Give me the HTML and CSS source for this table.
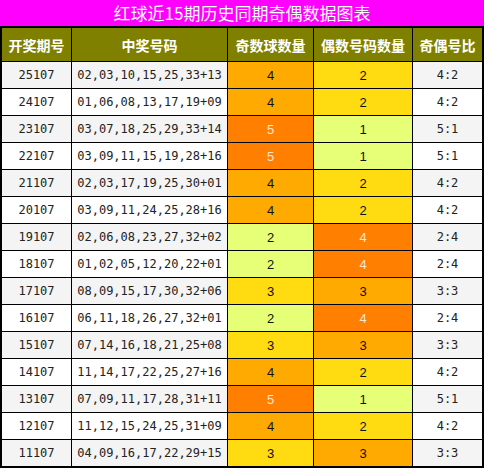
FILE: index.html
```html
<!DOCTYPE html>
<html lang="zh-CN">

<head>
    <meta charset="utf-8">
    <title>红球近15期历史同期奇偶数据图表</title>
    <link rel="stylesheet" href="styles.css">
</head>

<body>
    <div class="title">红球近15期历史同期奇偶数据图表</div>
    <table class="chart">
        <thead>
            <tr>
                <th class="c-issue">开奖期号</th>
                <th class="c-code">中奖号码</th>
                <th class="c-odd">奇数球数量</th>
                <th class="c-even">偶数号码数量</th>
                <th class="c-ratio">奇偶号比</th>
            </tr>
        </thead>
        <tbody>
            <tr>
                <td>25107</td><td class="code">02,03,10,15,25,33+13</td>
                <td class="num lv3">4</td><td class="num lv2">2</td><td>4:2</td>
            </tr>
            <tr>
                <td>24107</td><td class="code">01,06,08,13,17,19+09</td>
                <td class="num lv3">4</td><td class="num lv2">2</td><td>4:2</td>
            </tr>
            <tr>
                <td>23107</td><td class="code">03,07,18,25,29,33+14</td>
                <td class="num lv4">5</td><td class="num lv1">1</td><td>5:1</td>
            </tr>
            <tr>
                <td>22107</td><td class="code">03,09,11,15,19,28+16</td>
                <td class="num lv4">5</td><td class="num lv1">1</td><td>5:1</td>
            </tr>
            <tr>
                <td>21107</td><td class="code">02,03,17,19,25,30+01</td>
                <td class="num lv3">4</td><td class="num lv2">2</td><td>4:2</td>
            </tr>
            <tr>
                <td>20107</td><td class="code">03,09,11,24,25,28+16</td>
                <td class="num lv3">4</td><td class="num lv2">2</td><td>4:2</td>
            </tr>
            <tr>
                <td>19107</td><td class="code">02,06,08,23,27,32+02</td>
                <td class="num lv1">2</td><td class="num lv4">4</td><td>2:4</td>
            </tr>
            <tr>
                <td>18107</td><td class="code">01,02,05,12,20,22+01</td>
                <td class="num lv1">2</td><td class="num lv4">4</td><td>2:4</td>
            </tr>
            <tr>
                <td>17107</td><td class="code">08,09,15,17,30,32+06</td>
                <td class="num lv2">3</td><td class="num lv3">3</td><td>3:3</td>
            </tr>
            <tr>
                <td>16107</td><td class="code">06,11,18,26,27,32+01</td>
                <td class="num lv1">2</td><td class="num lv4">4</td><td>2:4</td>
            </tr>
            <tr>
                <td>15107</td><td class="code">07,14,16,18,21,25+08</td>
                <td class="num lv2">3</td><td class="num lv3">3</td><td>3:3</td>
            </tr>
            <tr>
                <td>14107</td><td class="code">11,14,17,22,25,27+16</td>
                <td class="num lv3">4</td><td class="num lv2">2</td><td>4:2</td>
            </tr>
            <tr>
                <td>13107</td><td class="code">07,09,11,17,28,31+11</td>
                <td class="num lv4">5</td><td class="num lv1">1</td><td>5:1</td>
            </tr>
            <tr>
                <td>12107</td><td class="code">11,12,15,24,25,31+09</td>
                <td class="num lv3">4</td><td class="num lv2">2</td><td>4:2</td>
            </tr>
            <tr>
                <td>11107</td><td class="code">04,09,16,17,22,29+15</td>
                <td class="num lv2">3</td><td class="num lv3">3</td><td>3:3</td>
            </tr>
        </tbody>
    </table>
</body>

</html>
```

FILE: styles.css
```css
body {
    margin: 0;
    background-color: #fff;
    font-family: "Liberation Sans", "Noto Sans CJK SC", sans-serif;
}

.title {
    height: 26px;
    line-height: 26px;
    background-color: #ff00ff;
    color: #fff;
    font-family: "Noto Sans CJK SC", sans-serif;
    font-size: 17px;
    text-align: center;
}

.chart {
    width: 484px;
    table-layout: fixed;
    border-collapse: separate;
    border-spacing: 0;
    border: 2px solid #000;
}

.chart th,
.chart td {
    box-sizing: border-box;
    padding: 0;
    text-align: center;
    border-left: 1px solid #000;
}

.chart th:first-child,
.chart td:first-child {
    border-left: none;
}

.chart th {
    height: 33px;
    background-color: #808000;
    color: #fff;
    font-family: "Noto Sans CJK SC", sans-serif;
    font-size: 14px;
    font-weight: bold;
}

.c-issue {
    width: 69px;
}

.c-code {
    width: 156px;
}

.c-odd {
    width: 86px;
}

.c-even {
    width: 99px;
}

.c-ratio {
    width: 70px;
}

.chart td {
    height: 27px;
    border-top: 1px solid #000;
    color: #222;
    font-family: "DejaVu Sans Mono", monospace;
    font-size: 12px;
}

.chart tbody tr:nth-child(odd) td {
    background-color: #f4f4f4;
}

.chart tbody tr:nth-child(even) td {
    background-color: #fff;
}

.chart td.num {
    font-family: "Liberation Sans", sans-serif;
    font-size: 13px;
    color: #111;
}

.chart tbody tr td.lv1 {
    background-color: #e6ff77;
}

.chart tbody tr td.lv2 {
    background-color: #ffdb11;
}

.chart tbody tr td.lv3 {
    background-color: #ffaa00;
}

.chart tbody tr td.lv4 {
    background-color: #ff8000;
    color: #ffe6cc;
}
```
